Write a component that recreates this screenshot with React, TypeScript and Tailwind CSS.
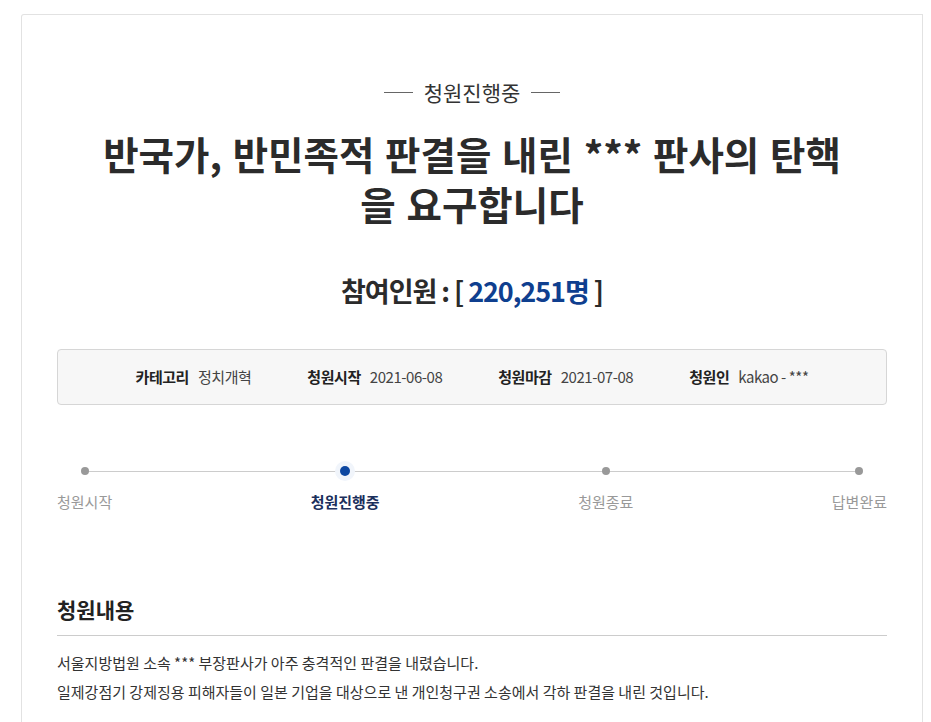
import React from "react";

const font = { fontFamily: '"Noto Sans CJK KR", "Noto Sans", sans-serif' };

function InfoItem({ label, value }: { label: string; value: string }) {
  return (
    <div className="flex items-center gap-[9px]">
      <span className="font-bold text-[#222]">{label}</span>
      <span className="text-[#444]">{value}</span>
    </div>
  );
}

function Step({ label, active }: { label: string; active?: boolean }) {
  return (
    <div className="flex flex-col items-center">
      <div className="flex h-[20px] w-[20px] items-center justify-center">
        {active ? (
          <div className="flex h-[20px] w-[20px] items-center justify-center rounded-full bg-[#f1f5fb]">
            <div className="h-[10px] w-[10px] rounded-full bg-[#0d47a1]" />
          </div>
        ) : (
          <div className="h-[8px] w-[8px] rounded-full bg-[#999999]" />
        )}
      </div>
      <div
        className={
          active
            ? "mt-[10px] text-[15px] font-bold leading-[22px] text-[#1b2f5c]"
            : "mt-[10px] text-[15px] leading-[22px] text-[#999999]"
        }
      >
        {label}
      </div>
    </div>
  );
}

export default function App() {
  return (
    <div className="min-h-[722px] bg-white pt-[14px] pl-[21px] pr-[8px]" style={font}>
      <div className="min-h-[708px] rounded-tl-[3px] border-l border-t border-r border-[#e2e2e2] px-[35px]">
        <div className="flex items-center justify-center gap-[11px] pt-[66px] text-[21px] leading-[22px] text-[#333]">
          <span className="block h-px w-[29px] bg-[#666]" />
          <span>청원진행중</span>
          <span className="block h-px w-[29px] bg-[#666]" />
        </div>
        <h1 className="mt-[25px] text-center text-[38.5px] font-bold leading-[50px] text-[#2b2b2b] [word-spacing:2px]">
          반국가, 반민족적 판결을 내린 *** 판사의 탄핵
          <br />을 요구합니다
        </h1>
        <div className="mt-[45px] text-center text-[27px] font-bold leading-[36px] text-[#2b2b2b] tracking-[-0.04em]">
          참여인원 : [ <span className="text-[#0f3f8f]">220,251명</span> ]
        </div>
        <div className="mt-[40px] flex h-[56px] items-center justify-center gap-[56px] rounded-[4px] border border-[#d6d6d6] bg-[#f7f7f7] text-[15px] tracking-[-0.03em]">
          <InfoItem label="카테고리" value="정치개혁" />
          <InfoItem label="청원시작" value="2021-06-08" />
          <InfoItem label="청원마감" value="2021-07-08" />
          <InfoItem label="청원인" value="kakao - ***" />
        </div>
        <div className="relative mt-[56px]">
          <div className="absolute left-[27px] right-[27px] top-[10px] h-px bg-[#cccccc]" />
          <div className="relative flex w-full justify-between">
            <Step label="청원시작" />
            <Step label="청원진행중" active />
            <Step label="청원종료" />
            <Step label="답변완료" />
          </div>
        </div>
        <h2 className="mt-[81px] text-[21px] font-bold leading-[30px] text-[#222]">청원내용</h2>
        <div className="mt-[11px] h-px bg-[#cccccc]" />
        <div className="mt-[12px] text-[15px] leading-[29px] text-[#333]">
          <p>서울지방법원 소속 *** 부장판사가 아주 충격적인 판결을 내렸습니다.</p>
          <p>일제강점기 강제징용 피해자들이 일본 기업을 대상으로 낸 개인청구권 소송에서 각하 판결을 내린 것입니다.</p>
        </div>
      </div>
    </div>
  );
}
